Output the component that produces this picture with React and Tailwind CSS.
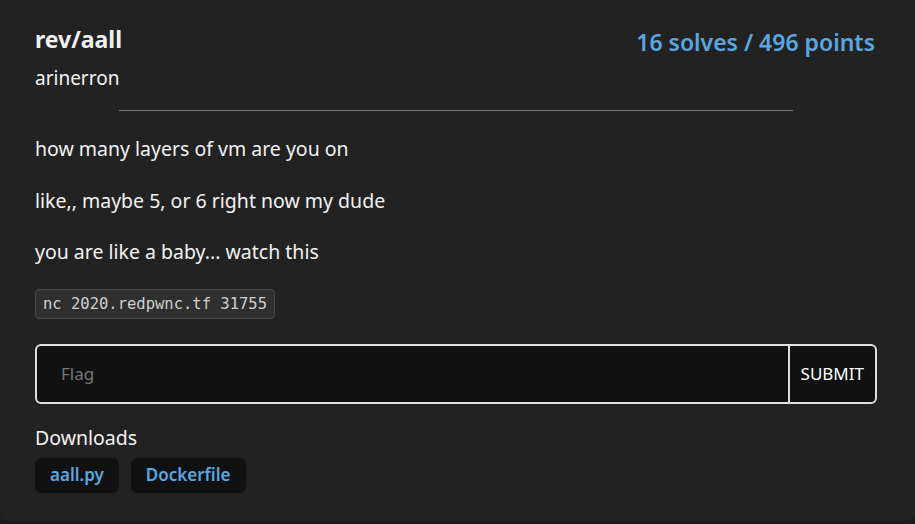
import React from "react";

const files = ["aall.py", "Dockerfile"];

const paragraphs = [
    "how many layers of vm are you on",
    "like,, maybe 5, or 6 right now my dude",
    "you are like a baby... watch this",
];

const App = () => {
    return (
        <div className="min-h-screen bg-[#1c1c1c]" style={{ fontFamily: "'Noto Sans', 'Open Sans', sans-serif" }}>
            <div className="bg-[#222222] rounded-b-md pl-[35px] pr-[38px] pt-[24px] pb-[28px] text-[#f2f2f2] h-[521px]">
                <div className="flex justify-between items-start">
                    <div>
                        <h1 className="text-[23px] font-bold leading-[30px]">rev/aall</h1>
                        <p className="text-[19px] mt-[11px] leading-[26px]">arinerron</p>
                    </div>
                    <div className="text-[23px] font-semibold text-[#5aa7e0] leading-[30px] mt-[3px] mr-[2px]">
                        16 solves / 496 points
                    </div>
                </div>
                <hr className="w-4/5 mx-auto mt-[19px] border-t border-[#777]" />
                <div className="mt-[25px] text-[19.5px] leading-[26px]">
                    {paragraphs.map((p) => (
                        <p key={p} className="mb-[25.5px]">{p}</p>
                    ))}
                </div>
                <code className="inline-block -mt-[3px] bg-[#2f2f2f] border border-[#4a4a4a] rounded px-[7px] py-[3px] text-[15.5px] text-[#d0d0d0] leading-[22px]" style={{ fontFamily: "'DejaVu Sans Mono', monospace" }}>
                    nc 2020.redpwnc.tf 31755
                </code>
                <form className="mt-[25px] flex border-2 border-[#dedede] rounded-md h-[60px] bg-[#111111] overflow-hidden" onSubmit={(e) => e.preventDefault()}>
                    <input
                        className="flex-1 bg-transparent px-[24px] text-[17px] text-white placeholder-[#777] outline-none"
                        placeholder="Flag"
                    />
                    <button className="border-l-2 border-[#dedede] px-[11px] text-[17px] text-white">SUBMIT</button>
                </form>
                <div className="mt-[21px] text-[19.5px] leading-[26px]">Downloads</div>
                <div className="flex gap-[12px] mt-[7px]">
                    {files.map((f) => (
                        <button key={f} className="bg-[#111111] rounded-md px-[15px] h-[35px] text-[17px] font-semibold text-[#5aa7e0]">
                            {f}
                        </button>
                    ))}
                </div>
            </div>
        </div>
    );
};

export default App;
